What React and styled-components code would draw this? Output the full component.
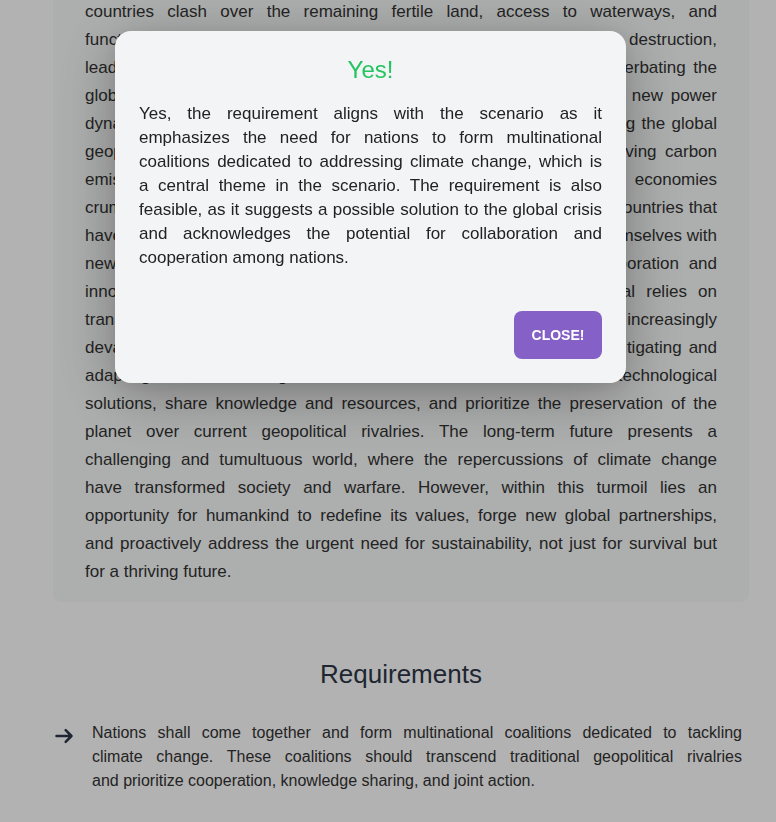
import React from "react";
import styled, { createGlobalStyle } from "styled-components";

const GlobalStyle = createGlobalStyle`
  html, body {
    margin: 0;
    padding: 0;
    background: #ffffff;
    overflow: hidden;
  }
  body {
    font-family: "Liberation Sans", Arial, Helvetica, sans-serif;
    color: #333333;
  }
  * { box-sizing: border-box; }
`;

const Page = styled.main`
  width: 696px;
  margin: -18px 0 0 53px;
`;

const ScenarioCard = styled.section`
  background: #f8faf9;
  border-radius: 8px;
  padding: 16px 32px;
`;

const Paragraph = styled.p`
  margin: 0;
  font-size: ${(p) => p.$size}px;
  line-height: ${(p) => p.$lh}px;
  color: ${(p) => p.$color || "#333333"};
`;

const Line = styled.span`
  display: block;
  text-align: justify;
  text-align-last: ${(p) => (p.$end ? "left" : "justify")};
`;

const Requirements = styled.section`
  margin-top: 56px;
`;

const Heading = styled.h2`
  margin: 0;
  font-size: 26px;
  line-height: 32px;
  font-weight: 400;
  text-align: center;
  color: #2d3748;
`;

const List = styled.ul`
  list-style: none;
  margin: 31px 0 0;
  padding: 0;
`;

const Item = styled.li`
  display: flex;
  align-items: flex-start;
  gap: 18px;
  padding: 0 7px 0 1px;
`;

const ArrowIcon = styled.svg`
  flex-shrink: 0;
  width: 20px;
  height: 20px;
  margin-top: 5px;
  color: #2d3748;
`;

const ItemText = styled.div`
  flex: 1;
`;

const Overlay = styled.div`
  position: fixed;
  inset: 0;
  background: rgba(0, 0, 0, 0.3);
  display: flex;
  align-items: flex-start;
  justify-content: flex-start;
  padding: 31px 0 0 115px;
`;

const Modal = styled.div`
  width: 511px;
  background: #f3f4f6;
  border-radius: 16px;
  padding: 24px;
  box-shadow: 0 12px 60px rgba(0, 0, 0, 0.3), 0 4px 16px rgba(0, 0, 0, 0.08);
  display: flex;
  flex-direction: column;
`;

const Title = styled.h3`
  margin: 0 0 17px;
  font-size: 24px;
  line-height: 30px;
  font-weight: 400;
  text-align: center;
  color: #22c55e;
`;

const Footer = styled.div`
  display: flex;
  justify-content: flex-end;
  margin-top: 41px;
`;

const CloseButton = styled.button`
  min-width: 88px;
  height: 48px;
  padding: 0 16px;
  border: none;
  border-radius: 8px;
  background: #8560c6;
  color: #ffffff;
  font-family: "Liberation Sans", Arial, Helvetica, sans-serif;
  font-size: 14px;
  font-weight: 700;
  text-transform: uppercase;
  cursor: pointer;
`;

const scenarioLines = [
  "countries clash over the remaining fertile land, access to waterways, and",
  "functionality of infrastructure. Extreme weather events cause severe destruction,",
  "leading to mass migrations and acute resource scarcity, further exacerbating the",
  "global crisis. In the midst of this chaos, nations shift rapidly towards new power",
  "dynamics, with climate-resilient nations quickly emerging and reshaping the global",
  "geopolitical landscape. Fossil fuel-dependent nations, still heavily driving carbon",
  "emissions, face internal unrest and economic collapse as their economies",
  "crumble under the weight of the rapidly changing climate, while those countries that",
  "have invested significantly in renewable energy and adaptation find themselves with",
  "new influence and prosperity. Societies finally recognize that collaboration and",
  "innovation are the only viable way forward, as humanity's survival relies on",
  "transcending national borders and long-held rivalries in the face of an increasingly",
  "devastated planet. Nations must unite in the urgent shared task of mitigating and",
  "adapting to climate change, invest in sustainable infrastructure and technological",
  "solutions, share knowledge and resources, and prioritize the preservation of the",
  "planet over current geopolitical rivalries. The long-term future presents a",
  "challenging and tumultuous world, where the repercussions of climate change",
  "have transformed society and warfare. However, within this turmoil lies an",
  "opportunity for humankind to redefine its values, forge new global partnerships,",
  "and proactively address the urgent need for sustainability, not just for survival but",
  "for a thriving future.",
];

const answerLines = [
  "Yes, the requirement aligns with the scenario as it",
  "emphasizes the need for nations to form multinational",
  "coalitions dedicated to addressing climate change, which is",
  "a central theme in the scenario. The requirement is also",
  "feasible, as it suggests a possible solution to the global crisis",
  "and acknowledges the potential for collaboration and",
  "cooperation among nations.",
];

const requirementLines = [
  "Nations shall come together and form multinational coalitions dedicated to tackling",
  "climate change. These coalitions should transcend traditional geopolitical rivalries",
  "and prioritize cooperation, knowledge sharing, and joint action.",
];

function JustifiedLines({ lines }) {
  return lines.map((text, i) => (
    <Line key={i} $end={i === lines.length - 1}>
      {text}
    </Line>
  ));
}

export default function App() {
  return (
    <>
      <GlobalStyle />
      <Page>
        <ScenarioCard>
          <Paragraph $size={17} $lh={28}>
            <JustifiedLines lines={scenarioLines} />
          </Paragraph>
        </ScenarioCard>
        <Requirements>
          <Heading>Requirements</Heading>
          <List>
            <Item>
              <ArrowIcon viewBox="0 0 24 24" fill="none" stroke="currentColor" strokeWidth="3" strokeLinecap="round" strokeLinejoin="round">
                <path d="M14 5l7 7m0 0l-7 7m7-7H3" />
              </ArrowIcon>
              <ItemText>
                <Paragraph $size={16} $lh={24}>
                  <JustifiedLines lines={requirementLines} />
                </Paragraph>
              </ItemText>
            </Item>
          </List>
        </Requirements>
      </Page>
      <Overlay>
        <Modal role="dialog" aria-modal="true">
          <Title>Yes!</Title>
          <Paragraph $size={17} $lh={24} $color="#222222">
            <JustifiedLines lines={answerLines} />
          </Paragraph>
          <Footer>
            <CloseButton>Close!</CloseButton>
          </Footer>
        </Modal>
      </Overlay>
    </>
  );
}
